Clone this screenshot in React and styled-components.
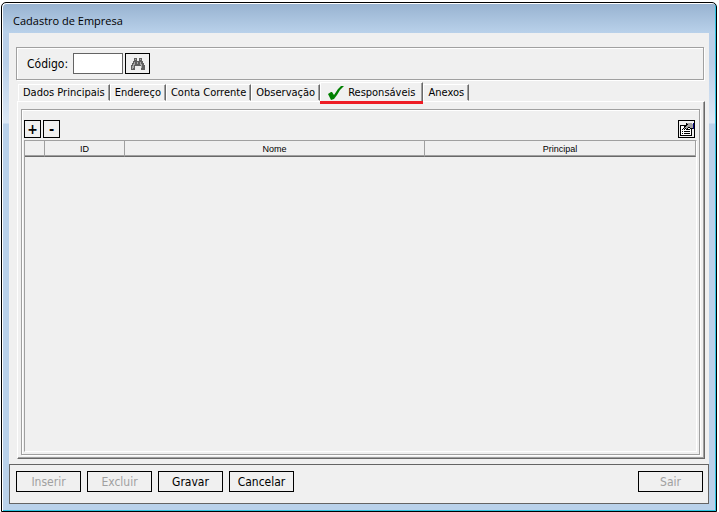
import React, { useState } from "react";
import styled, { createGlobalStyle } from "styled-components";

const GlobalStyle = createGlobalStyle`
    * {
        box-sizing: border-box;
    }

    body {
        margin: 0;
        background: #fff;
        color: #000;
        font-family: "DejaVu Sans Condensed", "DejaVu Sans", Tahoma, sans-serif;
        font-size: 11px;
    }

    button, input {
        font: inherit;
        color: inherit;
    }
`;

const Page = styled.div`
    display: flex;
    min-height: 100vh;
    padding: 2px 2px 0 1px;
`;

const Window = styled.div`
    flex: 1;
    display: flex;
    flex-direction: column;
    padding: 0 7px 7px;
    border: 1px solid #000;
    border-radius: 5px 5px 0 0;
    background: linear-gradient(#97b2d0, #b9d1ea 30px, #b9cfe8 31px, #b9cfe8 60px, #dce8f5 120px, #b9d1ea 121px);
    box-shadow: inset 1px 1px #fff, inset -1px -1px #2fc4e0;
`;

const Title = styled.h1`
    margin: 0;
    padding: 4px 4px 0;
    height: 30px;
    line-height: 28px;
    font-family: "Open Sans", "Segoe UI", sans-serif;
    font-size: 11px;
    font-weight: 400;
`;

const Client = styled.div`
    flex: 1;
    display: flex;
    flex-direction: column;
    background: #f0f0f0;
`;

const SearchForm = styled.form`
    display: flex;
    align-items: center;
    gap: 2px;
    height: 33px;
    margin: 14px 5px 0 7px;
    padding: 0 10px;
    border: 1px solid #a0a0a0;
    box-shadow: inset 1px 1px #fff, 1px 1px #fff;
`;

const Label = styled.label`
    width: 44px;
    font-size: 12px;
`;

const CodeInput = styled.input`
    width: 50px;
    height: 21px;
    padding: 0 3px;
    border: 1px solid #646464;
    border-radius: 0;
    background: #fff;
`;

const IconButton = styled.button`
    display: flex;
    align-items: center;
    justify-content: center;
    width: ${(props) => (props.$wide ? 25 : 17)}px;
    height: ${(props) => (props.$wide ? 21 : 18)}px;
    padding: 0;
    border: 1px solid #000;
    background: #f0f0f0;
    font-size: 14px;
    font-weight: 700;
    line-height: 1;
`;

const Tabs = styled.div`
    display: flex;
    align-items: flex-end;
    height: 19px;
    margin: 2px 9px 0;
`;

const Tab = styled.button`
    position: relative;
    z-index: ${(props) => (props.$active ? 1 : 0)};
    display: flex;
    align-items: center;
    gap: 4px;
    height: ${(props) => (props.$active ? 22 : 17)}px;
    margin-bottom: ${(props) => (props.$active ? -3 : 0)}px;
    padding: ${(props) => (props.$active ? "0 7px" : "0 4px")};
    border: 1px solid;
    border-color: #fff #696969 #f0f0f0 #fff;
    background: #f0f0f0;
    box-shadow: inset -1px 0 #a0a0a0;
    white-space: nowrap;

    ${(props) =>
        props.$active &&
        `
        padding-bottom: 2px;
        border-bottom: 0;

        &::after {
            content: "";
            position: absolute;
            inset: auto -1px 0;
            height: 3px;
            background: #ed1c24;
        }
    `}
`;

const TabPanel = styled.div`
    flex: 1;
    display: flex;
    margin: 0 4px 5px 8px;
    padding: 7px 4px 3px 3px;
    border: 1px solid;
    border-color: #fff #696969 #696969 #fff;
    box-shadow: inset -1px -1px #a0a0a0;
`;

const Frame = styled.div`
    flex: 1;
    display: flex;
    flex-direction: column;
    padding: 10px 2px 2px;
    border: 1px solid #a0a0a0;
    box-shadow: inset 1px 1px #fff, 1px 1px #fff;
`;

const Toolbar = styled.div`
    display: flex;
    gap: 2px;
    margin-bottom: 2px;
    padding-right: 2px;

    button:last-child {
        margin-left: auto;
    }
`;

const GridBox = styled.div`
    flex: 1;
    border: 1px solid;
    border-color: #a0a0a0 #fff #fff #a0a0a0;
`;

const Grid = styled.table`
    width: 100%;
    border-spacing: 0;
    table-layout: fixed;
    font-family: "Liberation Sans", Arial, sans-serif;
    font-size: 9px;
`;

const HeadCell = styled.th`
    width: ${(props) => props.$width || "auto"};
    height: 16px;
    padding: 0;
    border-right: 1px solid #a0a0a0;
    border-bottom: 1px solid #696969;
    box-shadow: inset 0 -1px #a0a0a0;
    font-weight: 400;
    text-align: center;
`;

const Footer = styled.footer`
    display: flex;
    gap: 6px;
    height: 40px;
    padding: 6px 5px 0 6px;
    border: 1px solid #646464;
`;

const ActionButton = styled.button`
    width: 65px;
    height: 21px;
    padding: 0;
    border: 1px solid #000;
    background: #f0f0f0;
    font-size: 12px;

    &:disabled {
        color: #a0a0a0;
    }

    &:last-child {
        margin-left: auto;
    }
`;

function BinocularsIcon() {
    return (
        <svg width="14" height="12" viewBox="0 0 14 12" shapeRendering="crispEdges" aria-hidden="true">
            <path fill="#606060" d="M3 0h3v3h2V0h3v3h1v2h1v2h1v5h-4V8H4v4H0V7h1V5h1V3h1z" />
            <path fill="#a8a8a8" d="M4 1h1v1H4zM9 1h1v1H9zM3 4h1v3H3zM2 6h1v4H2zM9 4h1v3H9zM10 6h1v4h-1zM6 4h1v2H6zM1 8h1v3H1z" />
        </svg>
    );
}

function CheckIcon() {
    return (
        <svg width="16" height="14" viewBox="0 0 16 14" aria-hidden="true">
            <path fill="#008000" d="M0 8l3-2 1 0 2 3 4-6 3-3h3l-4 4-3 5-3 4-3 1-1-2z" />
        </svg>
    );
}

function PropertiesIcon() {
    return (
        <svg width="15" height="14" viewBox="0 0 15 14" shapeRendering="crispEdges" aria-hidden="true">
            <path fill="#000" d="M1 3h12v11H1z" />
            <path fill="#fff" d="M2 4h10v9H2z" />
            <path fill="#000" d="M3 7h1v1H3zM3 9h1v1H3zM5 9h6v1H5zM3 11h1v1H3zM5 11h6v1H5zM8 7h3v1H8z" />
            <path fill="#000" d="M7 1h6v1h1v5h-3V6H9v1H8v1H7V7H6v1H5V7H4V6h1V4h1V3h1z" />
            <path fill="#a0a0a0" d="M8 1h5v1h1v4h-3V5H9v1H8v1H7V6H6V5h1V4h1V3h1V2H8zM5 6h1v1H5z" />
            <path fill="#000080" d="M14 1h1v6h-1z" />
        </svg>
    );
}

const tabs = ["Dados Principais", "Endereço", "Conta Corrente", "Observação", "Responsáveis", "Anexos"];

export default function App() {
    const [code, setCode] = useState("");
    const [activeTab, setActiveTab] = useState("Responsáveis");

    return (
        <>
            <GlobalStyle />
            <Page>
                <Window>
                    <Title>Cadastro de Empresa</Title>
                    <Client>
                        <SearchForm onSubmit={(e) => e.preventDefault()}>
                            <Label htmlFor="codigo">Código:</Label>
                            <CodeInput id="codigo" value={code} onChange={(e) => setCode(e.target.value)} />
                            <IconButton $wide aria-label="Pesquisar">
                                <BinocularsIcon />
                            </IconButton>
                        </SearchForm>

                        <Tabs role="tablist">
                            {tabs.map((tab) => (
                                <Tab
                                    key={tab}
                                    role="tab"
                                    aria-selected={tab === activeTab}
                                    $active={tab === activeTab}
                                    onClick={() => setActiveTab(tab)}
                                >
                                    {tab === "Responsáveis" && <CheckIcon />}
                                    {tab}
                                </Tab>
                            ))}
                        </Tabs>

                        <TabPanel role="tabpanel">
                            <Frame>
                                <Toolbar>
                                    <IconButton>+</IconButton>
                                    <IconButton>-</IconButton>
                                    <IconButton aria-label="Propriedades">
                                        <PropertiesIcon />
                                    </IconButton>
                                </Toolbar>
                                <GridBox>
                                    <Grid>
                                        <thead>
                                            <tr>
                                                <HeadCell $width="20px" />
                                                <HeadCell $width="80px">ID</HeadCell>
                                                <HeadCell $width="300px">Nome</HeadCell>
                                                <HeadCell>Principal</HeadCell>
                                            </tr>
                                        </thead>
                                        <tbody />
                                    </Grid>
                                </GridBox>
                            </Frame>
                        </TabPanel>

                        <Footer>
                            <ActionButton disabled>Inserir</ActionButton>
                            <ActionButton disabled>Excluir</ActionButton>
                            <ActionButton>Gravar</ActionButton>
                            <ActionButton>Cancelar</ActionButton>
                            <ActionButton disabled>Sair</ActionButton>
                        </Footer>
                    </Client>
                </Window>
            </Page>
        </>
    );
}
